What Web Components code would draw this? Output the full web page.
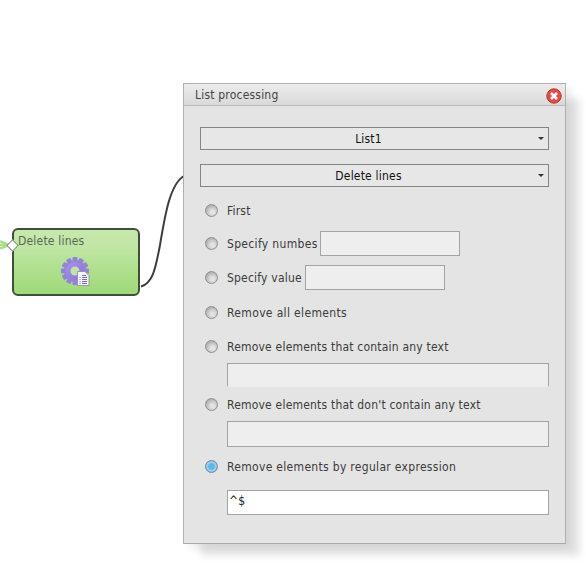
<!DOCTYPE html>
<html lang="en"><head><meta charset="utf-8"><title>List processing</title>
<style>
html,body{margin:0;padding:0;background:#fff}
body{width:586px;height:579px;overflow:hidden;font:12px/15px "DejaVu Sans",sans-serif;font-stretch:condensed;letter-spacing:.2px;color:#333}
</style></head><body>
<flow-canvas>
  <flow-wire></flow-wire>
  <flow-node>Delete lines</flow-node>
  <list-dialog heading="List processing">
    <drop-select>List1</drop-select>
    <drop-select>Delete lines</drop-select>
    <radio-row style="margin-top:15px;height:17px">First</radio-row>
    <radio-row style="margin-top:12px;height:25px;letter-spacing:.33px">Specify numbes<text-field slot="after" style="margin-left:2px;width:140px"></text-field></radio-row>
    <radio-row style="margin-top:9px;height:25px">Specify value<text-field slot="after" style="margin-left:3px;width:140px"></text-field></radio-row>
    <radio-row style="margin-top:14px;height:17px;letter-spacing:.35px">Remove all elements</radio-row>
    <radio-row style="margin-top:17px;height:17px">Remove elements that contain any text</radio-row>
    <text-field style="margin:8px 0 0 27px;height:24px" noedge></text-field>
    <radio-row style="margin-top:9px;height:17px">Remove elements that don't contain any text</radio-row>
    <text-field style="margin:8px 0 0 27px;height:26px"></text-field>
    <radio-row style="margin-top:11px;height:17px;letter-spacing:.31px" checked>Remove elements by regular expression</radio-row>
    <text-field style="margin:15px 0 0 27px" value="^$" white></text-field>
  </list-dialog>
</flow-canvas>
<script>
function el(name, css, html){
  customElements.define(name, class extends HTMLElement{
    connectedCallback(){
      if(this.shadowRoot) return;
      const r=this.attachShadow({mode:'open'});
      r.innerHTML='<style>'+css+'</style>'+(typeof html==='function'?html(this):html);
    }
  });
}
el('flow-canvas',':host{display:block;position:relative;width:586px;height:579px;overflow:hidden}','<slot></slot>');
el('flow-wire',':host{position:absolute;left:0;top:0;width:586px;height:579px;display:block}svg{display:block}',
 '<svg width="586" height="579" viewBox="0 0 586 579" fill="none"><path d="M141 286.500C152 283 155 272 160 245C165 215 170 184 184 176" stroke="#3d3d3d" stroke-width="2"/><path d="M0 241.500L9 245L0 248.500" stroke="#a6dc8a" stroke-width="2.500"/><path d="M0 245H9" stroke="#a6dc8a" stroke-width="2"/></svg>');
el('flow-node',`:host{position:absolute;left:12px;top:228px;width:128px;height:68px;box-sizing:border-box;border:2px solid #3f4f3c;border-radius:6px;background:linear-gradient(#c6e9ad,#c0e6a4 25%,#9fd978);color:#58685a;font-size:12px;display:block}
 .t{display:block;padding:4px 0 0 4px;line-height:15px}
 svg{position:absolute;left:47px;top:27px}
 i{position:absolute;left:-6px;top:11px;width:7px;height:7px;background:#fff;border:1px solid #7d8a78;transform:rotate(45deg)}`,
 `<i></i><span class="t"><slot></slot></span>
 <svg width="30" height="30" viewBox="0 0 30 30"><defs><linearGradient id="g" x1="0" y1="0" x2="1" y2="1"><stop offset="0" stop-color="#a896e6"/><stop offset="1" stop-color="#8672d2"/></linearGradient></defs><g fill="url(#g)"><circle cx="14" cy="14" r="11"/></g><g fill="#9583da"><rect x="11.500" y="0" width="5" height="28" rx="1"/><rect x="11.500" y="0" width="5" height="28" rx="1" transform="rotate(30 14 14)"/><rect x="11.500" y="0" width="5" height="28" rx="1" transform="rotate(60 14 14)"/><rect x="11.500" y="0" width="5" height="28" rx="1" transform="rotate(90 14 14)"/><rect x="11.500" y="0" width="5" height="28" rx="1" transform="rotate(120 14 14)"/><rect x="11.500" y="0" width="5" height="28" rx="1" transform="rotate(150 14 14)"/></g><circle cx="14" cy="14" r="9" fill="url(#g)"/><circle cx="14" cy="14" r="4.500" fill="#c3e3a8"/><path d="M17 14.500h7l4 4V28.500H16.500V14.500z" fill="#f6f3fb" stroke="#8c86a8" stroke-width=".8"/><path d="M21 18.500h4M21 20.500h5M21 22.500h5M21 24.500h5M21 26.500h5" stroke="#7a70b8"/><path d="M18.500 20.500h1M18.500 22.500h1M18.500 24.500h1M18.500 26.500h1" stroke="#8a80c8"/></svg>`);
el('list-dialog',`:host{position:absolute;left:183px;top:83px;width:383px;height:461px;box-sizing:border-box;display:block;border:1px solid #b1b1b1;border-bottom-color:#aaa;background:#e4e4e4;box-shadow:16px 14px 7px -2px rgba(0,0,0,.1),6px 5px 7px rgba(0,0,0,.07)}
 header{height:22px;box-sizing:border-box;border-bottom:1px solid #b9b9b9;background:linear-gradient(#ececec,#d9d9d9);display:flex;align-items:center;justify-content:space-between;padding:2px 3px 0 11px;color:#444;font-size:12px}
 main{display:flex;flex-direction:column;padding:21px 16px 0}
 svg{display:block;margin-top:1px}`,
 h=>`<header><span>${h.getAttribute('heading')}</span><svg width="16" height="16" viewBox="0 0 16 16"><circle cx="8" cy="8" r="7.200" fill="#e44a42" stroke="#b9332f"/><path d="M5 5l6 6M11 5l-6 6" stroke="#fff" stroke-width="2.600"/></svg></header><main><slot></slot></main>`);
el('drop-select',`:host{display:flex;align-items:center;justify-content:center;position:relative;height:23px;box-sizing:border-box;border:1px solid #858585;background:#e7e7e7;color:#111;font-size:12px;padding:2px 12px 0 0}
 :host(:not(:first-child)){margin-top:14px}
 i{position:absolute;right:4px;top:9px;border:3px solid transparent;border-top:3px solid #333;border-bottom:0}`,'<slot></slot><i></i>');
el('radio-row',`:host{display:flex;align-items:center;color:#3b3b3b;padding-left:5px}
 b{flex:none;width:13px;height:13px;border-radius:50%;box-sizing:border-box;border:1px solid #8f8f8f;background:radial-gradient(circle at 60% 65%,#e2e2e2 0 20%,#a9a9a9 80%);margin:-1px 9px 0 0}
 span{position:relative;top:1px}
 :host([checked]) b{border-color:#5f8fb5;background:radial-gradient(circle,#5cb8e6 0 35%,#a9cde6 55%,#6f9fc4 100%)}`,'<b></b><span><slot></slot></span><slot name="after"></slot>');
el('text-field',`:host{display:block;height:25px;box-sizing:border-box;border:1px solid #a3a3a3;background:#eeeeee;color:#222;font-size:12px;line-height:17px;padding:2px 1px}
 :host([white]){background:#fff}
 :host([noedge]){border-bottom-color:#eee}`,h=>h.getAttribute('value')||'');
</script>
</body></html>
